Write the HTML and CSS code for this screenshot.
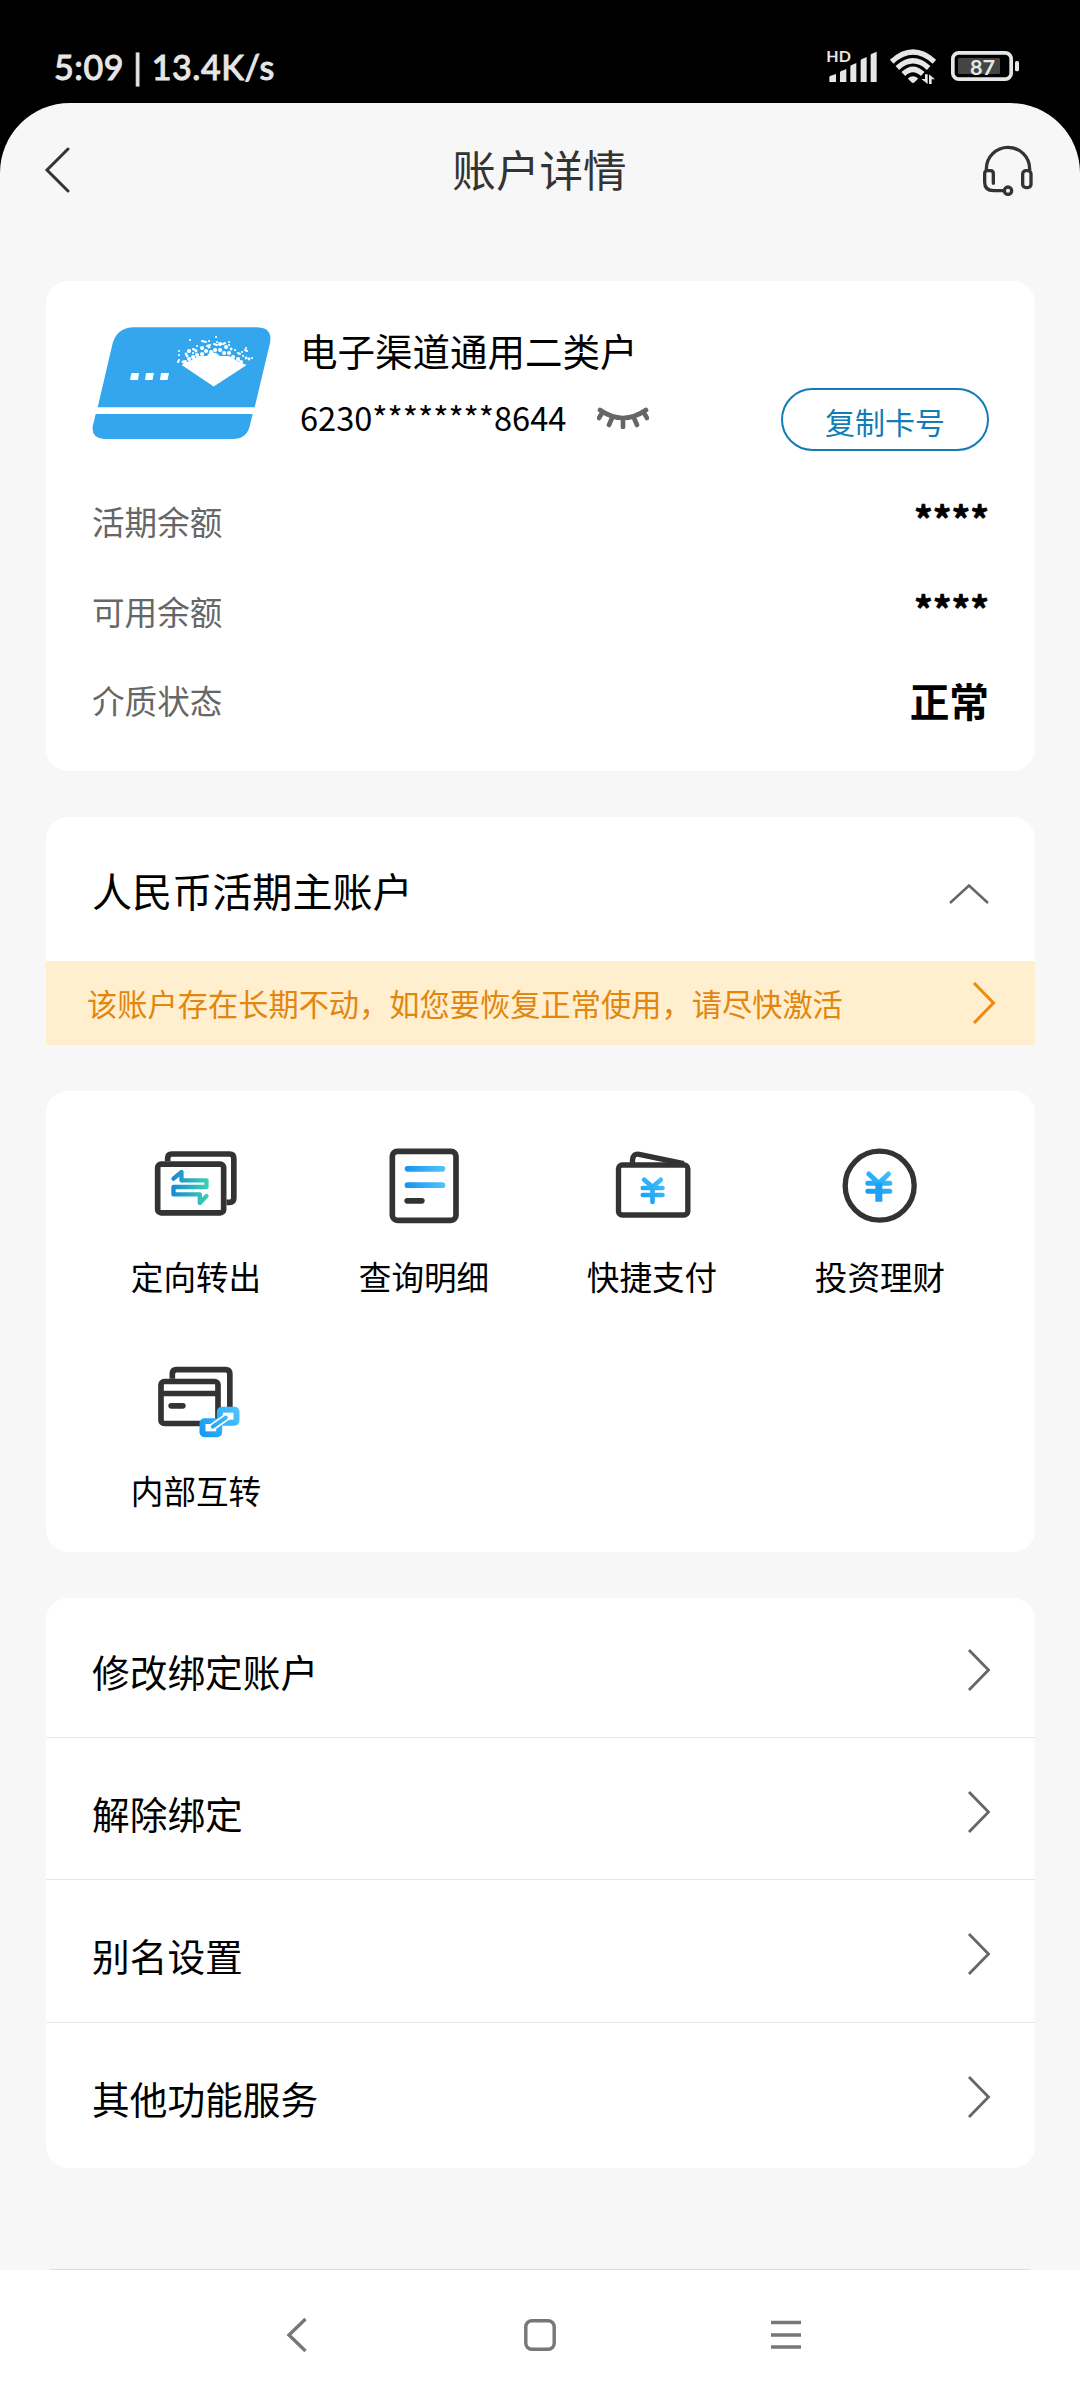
FILE: index.html
```html
<!DOCTYPE html>
<html lang="zh-CN">
<head>
<meta charset="utf-8">
<title>账户详情</title>
<link rel="stylesheet" href="styles.css">
</head>
<body>
<div class="phone">
  <div class="status">
    <span class="status-text">5:09 | 13.4K/s</span>
    <svg class="status-icons" viewBox="0 0 660 135" fill="#e6e6e6">
      <text x="19" y="66" class="hd">HD</text>
      <path d="M28 126V112Q28 108 32 107L48 102V126ZM60 126V98Q60 94 64 93L79 87V126ZM91 126V80Q91 76 95 75L109 69V126ZM122 126V62Q122 58 126 57L140 51V126ZM152 126V46Q152 42 156 41L170 35V126Z"/>
      <g fill="none" stroke="#e6e6e6" stroke-width="16">
        <path d="M215 65Q279 7 343 65"/>
        <path d="M232 84Q279 41 326 84"/>
        <path d="M250 102Q279 74 308 102"/>
      </g>
      <path d="M264 115Q279 102 294 115Q293 120 279 130Q265 120 264 115Z"/>
      <path d="M315 103H323V132L304 117H315ZM327 132V103L345 118H335V132Z"/>
      <rect x="398.500" y="38.500" width="175" height="79" rx="18" fill="none" stroke="#e6e6e6" stroke-width="11"/>
      <rect x="414" y="54" width="126" height="48" rx="4" fill="#444"/>
      <rect x="585" y="63" width="12" height="31" rx="5"/>
      <text x="450" y="104" class="level">87</text>
    </svg>
  </div>

  <div class="screen">
    <header class="topbar">
      <svg class="back" viewBox="0 0 26 48"><path d="M24 3L3 24L24 45"/></svg>
      <h1>账户详情</h1>
      <svg class="headset" viewBox="486 312 153 153">
        <path d="M499 388V384A65 65 0 0 1 629 384V388"/>
        <path d="M520 427V398Q520 389 511 389H503Q494 389 494 398V424Q494 449 521 449H553"/>
        <rect x="608" y="389" width="25" height="51" rx="10"/>
        <circle cx="564" cy="449" r="11"/>
      </svg>
    </header>

    <main>
      <section class="card account">
        <div class="summary">
          <svg class="bankcard" viewBox="0 0 179 113">
            <path fill="#33a6ee" d="M5.700 80.300L20 19Q24 .3 42 .3H164Q181 .3 178 16L162.700 80.300ZM3.700 87H160.700L157.500 100Q154 112 141 112H12Q-1 111 .8 99Z"/>
            <g fill="#fff">
              <path d="M39.500 46H47L46 53H38ZM54 46H62L60.500 53H53ZM69 46H77L75.500 53H68Z"/>
              <path d="M89.700 38Q103 31 107 29L115 29L118 25L124 26L128 29L137 29L147 35L154.700 38L121.700 59.500Z"/>
            </g>
            <g fill="none" stroke="#fff" stroke-linecap="round">
              <path stroke-width="4" d="M93 35h.1M97 32h.1M101 30h.1M97 24h.1M105 28h.1M110 27h.1M114 24h.1M119 25h.1M123 23h.1M128 23h.1M132 26h.1M137 26h.1M141 30h.1M146 32h.1M149 35h.1M134 20h.1M128 17h.1M110 21h.1"/>
              <path stroke-width="2.800" d="M91 35h.1M95 29h.1M104 24h.1M154 31h.1M157 32h.1M94 27h.1M139 22h.1M117 20h.1"/>
              <path stroke-width="2" d="M86 35l1-2M87 24h.1M87 28h.1M98 13h.1M101 22l2 1M105 19h.1M110 14l4 1M115 19l3-1M122 17l3 1M124 10h.1M125 15h.1M131 17l2-1M137 15h.1M137 18h.1M143 23h.1M146 26l2 1M150 25h.1M153 23l2 1M154 21h.1M151 29h.1M160 31h.1M117 14h.1M101 26h.1"/>
            </g>
          </svg>
          <div class="who">
            <div class="name">电子渠道通用二类户</div>
            <div class="number">6230********8644
              <svg class="eye" viewBox="0 0 52 22"><path d="M3 3Q26 19 49 3M5 6L2 11M15 11L12 18M26 13V20M37 11L40 18M47 6L50 11"/></svg>
            </div>
          </div>
          <button class="copy">复制卡号</button>
        </div>
        <div class="row"><span>活期余额</span><b class="masked">****</b></div>
        <div class="row"><span>可用余额</span><b class="masked">****</b></div>
        <div class="row"><span>介质状态</span><b>正常</b></div>
      </section>

      <section class="card main-account">
        <div class="main-head">
          <span>人民币活期主账户</span>
          <svg class="up" viewBox="0 0 40 20"><path d="M1 19L20 1.500L39 19"/></svg>
        </div>
        <div class="notice">
          <span>该账户存在长期不动，如您要恢复正常使用，请尽快激活</span>
          <svg class="chevron" viewBox="0 0 24 42"><path d="M2 1L21.500 21L2 41"/></svg>
        </div>
      </section>

      <section class="card actions">
        <div class="action">
          <svg viewBox="160.500 69 252 252">
            <defs>
              <linearGradient id="teal" gradientUnits="userSpaceOnUse" x1="213" y1="200" x2="325" y2="200"><stop offset="0" stop-color="#1689d6"/><stop offset="1" stop-color="#3fd0ae"/></linearGradient>
              <linearGradient id="sky" gradientUnits="userSpaceOnUse" x1="912" y1="0" x2="1034" y2="0"><stop offset="0" stop-color="#1592f0"/><stop offset="1" stop-color="#55c4fa"/></linearGradient>
            </defs>
            <g fill="none" stroke="#333" stroke-width="17">
              <path d="M201.500 124V115Q201.500 102 214 102H387Q400 102 400 115V234Q400 247 387 247H378"/>
              <rect x="171.500" y="132.500" width="198" height="146" rx="10"/>
            </g>
            <path fill="none" stroke="url(#teal)" stroke-width="13" stroke-linejoin="round" stroke-linecap="round" d="M219 176L243 156V181H318V201H219V223H298V249L318 228"/>
          </svg>
          <span>定向转出</span>
        </div>
        <div class="action">
          <svg viewBox="844.500 69 252 252" fill="none" stroke-linecap="round">
            <rect x="875.500" y="94" width="191" height="207" rx="15" stroke="#333" stroke-width="17"/>
            <path fill="url(#sky)" d="M921 138H1026A8.500 8.500 0 0 1 1026 155H921A8.500 8.500 0 0 1 921 138ZM921 187H1026A8.500 8.500 0 0 1 1026 204H921A8.500 8.500 0 0 1 921 187Z"/>
            <path stroke="#333" stroke-width="17" d="M920 242.500H964"/>
          </svg>
          <span>查询明细</span>
        </div>
        <div class="action">
          <svg viewBox="208.500 69 252 252">
            <defs><linearGradient id="yen" x1="0" y1="1" x2="1" y2="0"><stop offset="0" stop-color="#169cf8"/><stop offset="1" stop-color="#45bff8"/></linearGradient></defs>
            <g fill="none" stroke="#333" stroke-width="16">
              <rect x="234" y="135" width="208" height="150" rx="11"/>
              <path d="M276 133V120Q278 99 296 103L430 131"/>
            </g>
            <path fill="none" stroke="url(#yen)" stroke-width="14" stroke-linecap="round" d="M311 179L336 201L361 179M307 204H366M307 225H366M336 201V246"/>
          </svg>
          <span>快捷支付</span>
        </div>
        <div class="action">
          <svg viewBox="892.500 69 252 252">
            <circle cx="1017.500" cy="197" r="103.500" fill="none" stroke="#333" stroke-width="16"/>
            <path fill="none" stroke="url(#yen)" stroke-width="15" stroke-linecap="round" d="M985 162L1015 190L1044 162M982 190H1048M982 214H1048"/>
            <path fill="none" stroke="#1f9ff8" stroke-width="21" d="M1015 188V245.100"/>
          </svg>
          <span>投资理财</span>
        </div>
        <div class="action">
          <svg viewBox="160.500 711 252 252" overflow="visible">
            <defs><linearGradient id="link" gradientUnits="userSpaceOnUse" x1="298" y1="940" x2="416" y2="870"><stop offset="0" stop-color="#1599f5"/><stop offset="1" stop-color="#4ec4fc"/></linearGradient></defs>
            <g fill="none" stroke="#333" stroke-width="17">
              <path d="M215.500 776V762Q215.500 749 228 749H375Q388 749 388 762V870"/>
              <rect x="181.500" y="784.500" width="171" height="126" rx="10"/>
              <path d="M182 820.500H352"/>
              <path stroke-linecap="round" d="M212 857.500H247"/>
            </g>
            <rect x="349" y="860" width="68" height="57" rx="15" fill="url(#link)"/>
            <rect x="297" y="895" width="68" height="57" rx="15" fill="url(#link)"/>
            <rect x="367" y="878" width="32" height="21" fill="#fff"/>
            <rect x="315" y="912" width="32" height="22" fill="#fff"/>
            <path fill="none" stroke="#fff" stroke-width="22" d="M332 924L383 888"/>
            <path fill="none" stroke="url(#link)" stroke-width="12" stroke-linecap="round" d="M337 920L376 893"/>
          </svg>
          <span>内部互转</span>
        </div>
      </section>

      <section class="card menu">
        <div class="item"><span>修改绑定账户</span><svg class="chevron" viewBox="0 0 24 42"><path d="M2 1L21.500 21L2 41"/></svg></div>
        <div class="item"><span>解除绑定</span><svg class="chevron" viewBox="0 0 24 42"><path d="M2 1L21.500 21L2 41"/></svg></div>
        <div class="item"><span>别名设置</span><svg class="chevron" viewBox="0 0 24 42"><path d="M2 1L21.500 21L2 41"/></svg></div>
        <div class="item"><span>其他功能服务</span><svg class="chevron" viewBox="0 0 24 42"><path d="M2 1L21.500 21L2 41"/></svg></div>
      </section>
    </main>
    <div class="divider"></div>
  </div>

  <nav class="navbar">
    <svg viewBox="0 0 36 36"><path d="M29.500 2L13 18L29.500 34"/></svg>
    <svg viewBox="0 0 36 36"><rect x="3.800" y="3.800" width="28.400" height="28.400" rx="6"/></svg>
    <svg viewBox="0 0 36 36"><path d="M3 5.500H33M3 18H33M3 30H33"/></svg>
  </nav>
</div>
</body>
</html>
```
FILE: styles.css
```css
* { box-sizing: border-box; }
body {
  margin: 0;
  background: #000;
  font-family: "Noto Sans CJK SC", sans-serif;
  color: #000;
}
svg { display: block; flex: none; }
.phone {
  width: 1080px;
  height: 2400px;
  display: flex;
  flex-direction: column;
  overflow: hidden;
}
.status {
  height: 103px;
  flex: none;
  display: flex;
  justify-content: space-between;
  align-items: flex-start;
  padding: 40px 40px 0 54px;
}
.status-text {
  font: 500 34px/54px Lato, sans-serif;
  letter-spacing: .6px;
  color: #e6e6e6;
  -webkit-text-stroke: .9px #e6e6e6;
  white-space: pre;
}
.status-icons { width: 220px; height: 45px; }
.hd { font: 700 48px Lato, sans-serif; }
.level { font: 700 65px Lato, sans-serif; }

.screen {
  height: 2167px;
  flex: none;
  background: #f7f7f7;
  border-radius: 70px 70px 0 0;
  display: flex;
  flex-direction: column;
}
.topbar {
  height: 134px;
  display: flex;
  align-items: center;
  justify-content: space-between;
  padding: 0 47px 0 44px;
  margin-bottom: 44px;
}
.topbar h1 {
  margin: 0 0 5px 27px;
  font-size: 43.600px;
  line-height: 64px;
  font-weight: 400;
  color: #333;
}
.back { width: 26px; height: 48px; fill: none; stroke: #333; stroke-width: 3; stroke-linecap: round; }
.headset { width: 51px; height: 51px; fill: none; stroke: #333; stroke-width: 10; stroke-linecap: round; }

main {
  flex: 1;
  display: flex;
  flex-direction: column;
  gap: 46px;
  padding: 0 45px 0 46px;
}
.card { background: #fff; border-radius: 22px; overflow: hidden; }

.account { height: 490px; padding: 46px 46px 0 46px; }
.summary { display: flex; height: 149px; }
.bankcard { width: 179px; height: 113px; }
.who { flex: 1; padding-left: 29px; }
.name { font-size: 37.500px; line-height: 46px; }
.number {
  display: flex;
  align-items: center;
  gap: 31px;
  font-size: 32.600px;
  line-height: 48px;
  margin-top: 20px;
}
.eye { width: 52px; height: 22px; margin-top: 2px; fill: none; stroke: #666; stroke-width: 4.600; stroke-linecap: round; }
.copy {
  width: 208px;
  height: 63px;
  margin: 61px 0 0;
  padding: 2px 0 0;
  border: 2px solid #147cb4;
  border-radius: 32px;
  background: #fff;
  color: #147cb4;
  font: 400 30px/44px "Noto Sans CJK SC", sans-serif;
}
.row {
  height: 89.500px;
  display: flex;
  justify-content: space-between;
  align-items: center;
}
.row span { font-size: 32.600px; color: #666; }
.row b { font-size: 39.700px; font-weight: 700; }
.row .masked { font-size: 37px; padding-bottom: 5px; -webkit-text-stroke: .6px #000; }

.main-account { height: 228px; border-radius: 22px 22px 0 0; }
.main-head {
  height: 144px;
  display: flex;
  align-items: center;
  justify-content: space-between;
  padding: 0 46px 0 46px;
  font-size: 40.100px;
}
.up { width: 40px; height: 20px; margin-top: 10px; fill: none; stroke: #666; stroke-width: 2.500; }
.notice {
  height: 84px;
  display: flex;
  align-items: center;
  justify-content: space-between;
  padding: 0 39px 0 41px;
  background: #ffefce;
  color: #e2860f;
  font-size: 30.240px;
}
.chevron { width: 24px; height: 42px; fill: none; stroke: #666; stroke-width: 2.800; }
.notice .chevron { stroke: #ee8a10; stroke-width: 3; }

.actions {
  height: 461px;
  padding: 52px 35px 0 36px;
  display: grid;
  grid-template-columns: repeat(4, 228px);
  grid-auto-rows: 214px;
}
.action {
  display: flex;
  flex-direction: column;
  align-items: center;
  gap: 25px;
  font-size: 32.600px;
  line-height: 48px;
}
.action svg { width: 84px; height: 84px; }

.menu { height: 570px; }
.item {
  height: 142.300px;
  display: flex;
  align-items: center;
  justify-content: space-between;
  padding: 7px 44px 0 46px;
  border-bottom: 1.500px solid #e6e6e6;
  font-size: 37.700px;
}
.item:first-child { height: 140px; padding-top: 5px; }
.item:last-child { height: 145px; padding-top: 4px; border-bottom: 0; }
.divider { height: 1px; margin: 0 50px; background: #ddd; }

.navbar {
  flex: 1;
  background: #fff;
  display: flex;
  justify-content: center;
  gap: 210px;
  padding-top: 47px;
}
.navbar svg { width: 36px; height: 36px; fill: none; stroke: #777; stroke-width: 3.400; }
```
